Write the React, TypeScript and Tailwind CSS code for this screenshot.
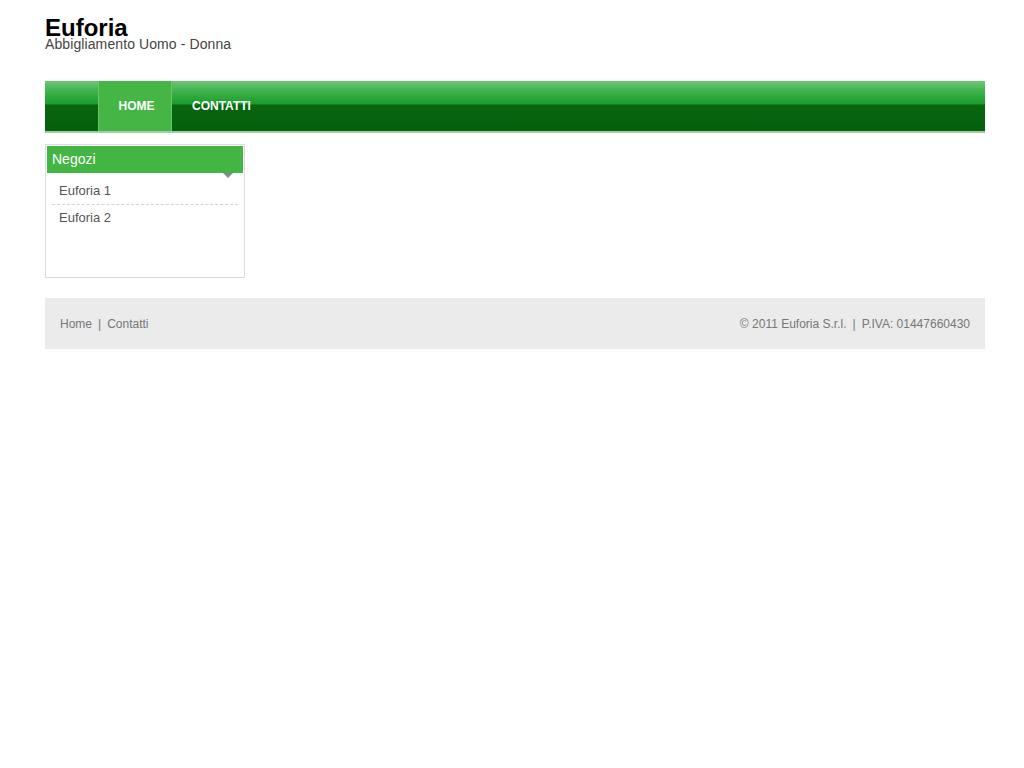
import React from "react";

const shops = ["Euforia 1", "Euforia 2"];

export default function App() {
  return (
    <div className="min-h-screen bg-white font-['Liberation_Sans',Arial,sans-serif]">
      <div className="ml-[45px] w-[940px]">
        <header className="pt-[18px]">
          <h1 className="text-[24px] font-bold leading-[20px] text-black">Euforia</h1>
          <p className="text-[14px] leading-[13px] tracking-[0.1px] text-[#444]">Abbigliamento Uomo - Donna</p>
        </header>

        <nav className="mt-[30px] border-b-2 border-[#9fcfa3]">
          <div className="flex h-[50px] bg-[linear-gradient(to_bottom,#6dc675_0%,#3fb34d_20%,#1b9c2b_46%,#07660f_48%,#05600e_100%)] pl-[53px]">
            <a className="flex w-[74px] items-center justify-center border-x border-[#69c46a] bg-[#45b545] pl-[3px] text-[12px] font-bold text-white">
              HOME
            </a>
            <a className="flex items-center px-[20px] text-[12px] font-bold text-white">CONTATTI</a>
          </div>
        </nav>

        <div className="mt-[11px] flex">
          <aside className="h-[134px] w-[200px] border border-[#dcdcdc] p-px">
            <div className="relative flex h-[27px] items-center bg-[#43b543] px-[5px] text-[14px] text-white">
              Negozi
              <span className="absolute right-[10px] top-[27px] h-0 w-0 border-x-[5px] border-t-[5px] border-x-transparent border-t-[#888]" />
            </div>
            <ul className="px-[5px] pt-[5px]">
              {shops.map((s, i) => (
                <li
                  key={s}
                  className={
                    "px-[7px] text-[13px] leading-[26px] text-[#555] " +
                    (i < shops.length - 1 ? "border-b border-dashed border-[#d4d4d4]" : "")
                  }
                >
                  {s}
                </li>
              ))}
            </ul>
          </aside>
        </div>

        <footer className="mt-[20px] flex h-[51px] w-[940px] items-center justify-between bg-[#ebebeb] px-[15px] text-[12px] text-[#777]">
          <div className="flex items-center gap-[6px]">
            <span>Home</span>
            <span>|</span>
            <span>Contatti</span>
          </div>
          <div className="flex items-center gap-[6px]">
            <span>© 2011 Euforia S.r.l.</span>
            <span>|</span>
            <span>P.IVA: 01447660430</span>
          </div>
        </footer>
      </div>
    </div>
  );
}
